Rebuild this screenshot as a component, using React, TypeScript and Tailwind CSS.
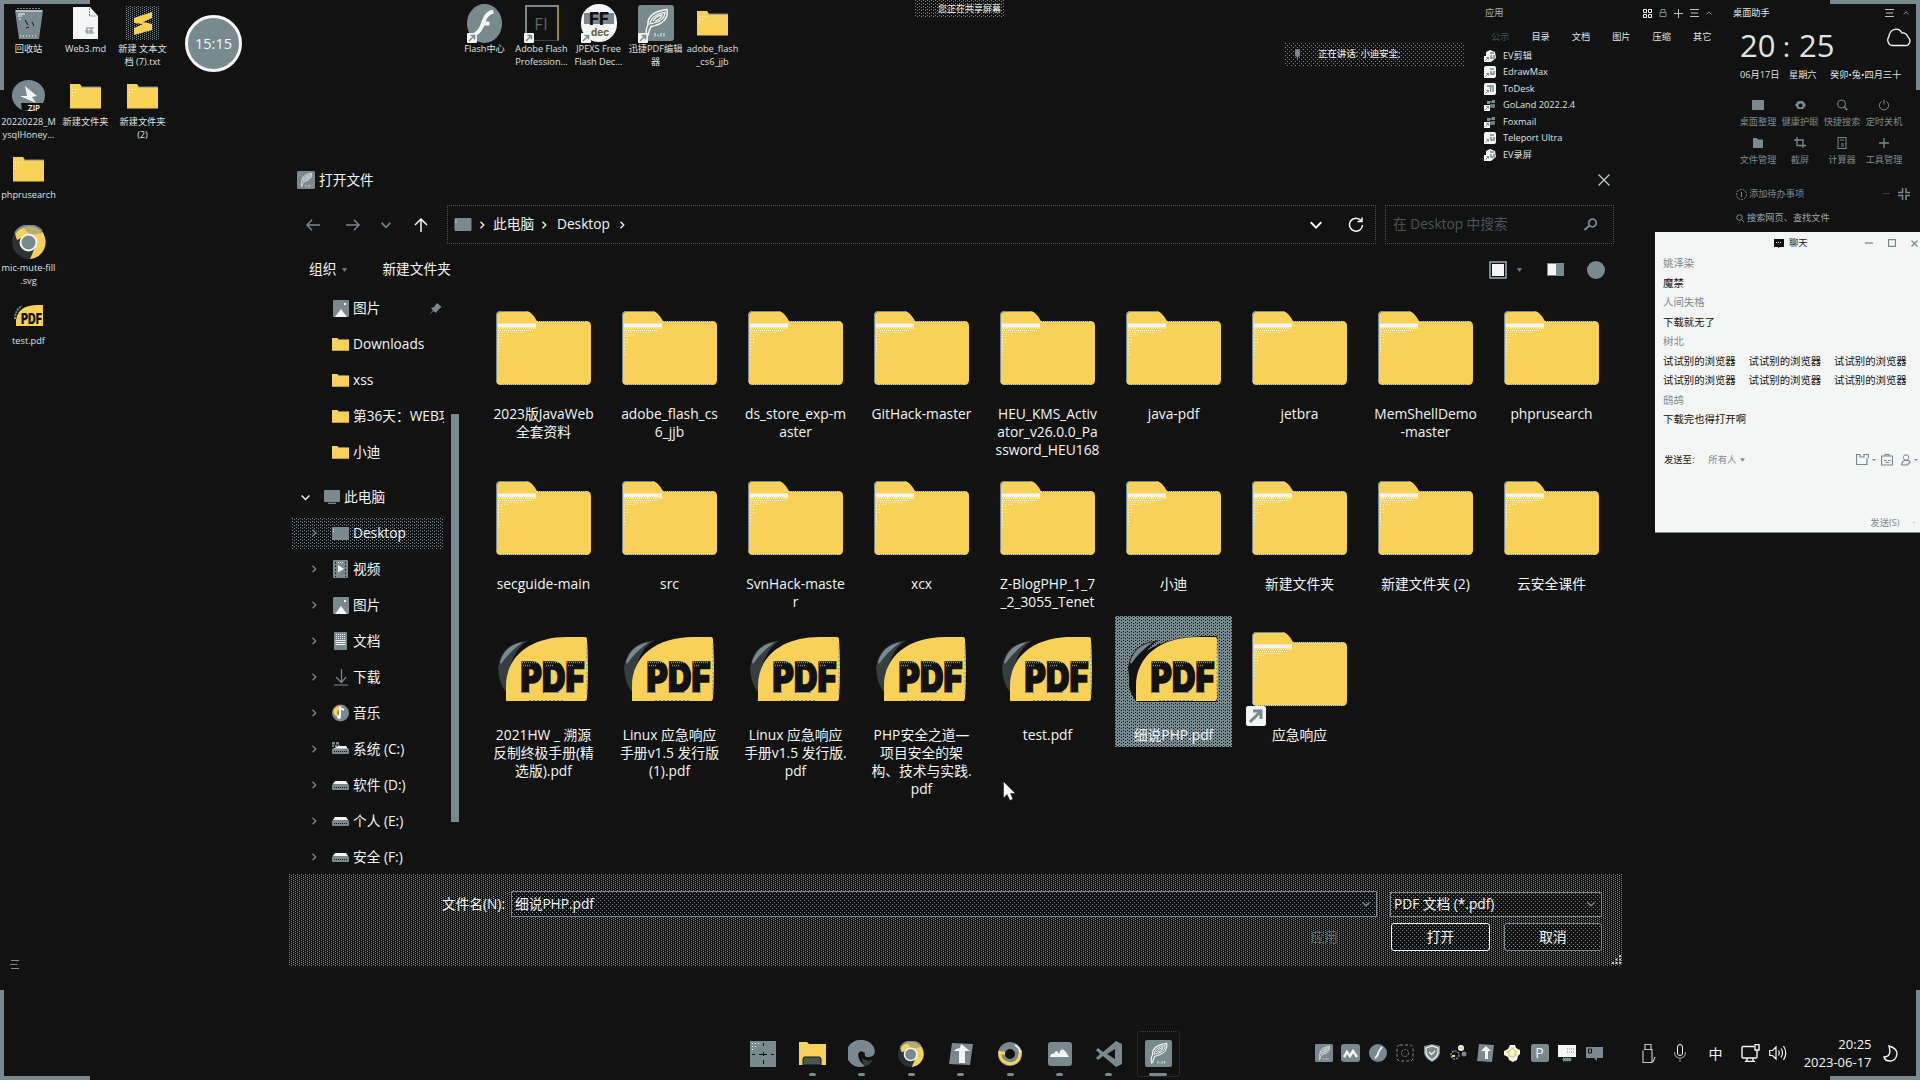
import React from "react";

const G = "#788a8f";
const W = "#f4f6f5";
const Y = "#f8d159";
const K = "#121212";

const FONT = "font-['Open_Sans','Noto_Sans_CJK_SC',sans-serif]";

const DITHER_DENSE =
  "bg-[radial-gradient(circle_at_0.5px_0.5px,#788a8f_0.6px,transparent_0.6px),radial-gradient(circle_at_2.5px_1.5px,#788a8f_0.6px,transparent_0.6px)] bg-[size:4px_2px]";
const DITHER_MID =
  "bg-[radial-gradient(circle_at_0.5px_0.5px,#788a8f_0.6px,transparent_0.6px),radial-gradient(circle_at_2.5px_1.5px,#788a8f_0.6px,transparent_0.6px)] bg-[size:4px_3px]";
const DITHER_LIGHT =
  "bg-[radial-gradient(circle_at_0.5px_0.5px,#788a8f_0.6px,transparent_0.6px),radial-gradient(circle_at_2.5px_2.5px,#788a8f_0.6px,transparent_0.6px)] bg-[size:4px_4px]";
const DITHER_SELECTED =
  "bg-[#788a8f] bg-[radial-gradient(circle_at_0.5px_0.5px,#121212_0.6px,transparent_0.6px),radial-gradient(circle_at_2.5px_1.5px,#121212_0.6px,transparent_0.6px)] bg-[size:4px_3px]";

type SvgProps = { w: number; h: number; vb: string; children: React.ReactNode; className?: string };
const Svg = ({ w, h, vb, children, className }: SvgProps) => (
  <svg width={w} height={h} viewBox={vb} fill="none" className={"shrink-0 " + (className ?? "")}>
    {children}
  </svg>
);

/* ---------- icons ---------- */

const BigFolder = () => (
  <Svg w={95} h={74} vb="0 0 95 74">
    <path d="M0 5Q0 0 5 0H31Q36 1 41 10H90Q95 10 95 15V69Q95 74 90 74H5Q0 74 0 69Z" fill={Y} />
    <path d="M0.5 70V5Q1 0.5 5 0.5H31" stroke={G} strokeWidth="1" />
    <path d="M42 10.5H90M6 73.5H90" stroke={G} strokeDasharray="1 1" />
    <rect x="2" y="12.5" width="38" height="4" fill={W} />
    <path d="M3 17.5H40" stroke={W} strokeDasharray="1 1" />
    <path d="M2 19.5H36" stroke={W} strokeDasharray="1 1" />
    <path d="M3 21.5H28" stroke={W} strokeDasharray="1 2" />
    <path d="M2 23.5H14" stroke={W} strokeDasharray="1 2" />
    <path d="M2.5 25V45M5.5 25V34" stroke={W} strokeDasharray="1 2" />
  </Svg>
);

const PdfIcon = ({ selected }: { selected?: boolean }) => (
  <Svg w={93} h={66} vb="0 0 93 66">
    {selected && <path d="M2 50C0 20 30 -2 90 0V66H10Q4 60 2 50Z" fill={K} />}
    <path d="M1 32Q4 8 28 5L32 4Q12 14 9 56Q2 48 1 32Z" fill={selected ? K : "#363e40"} />
    <path d="M3 26Q8 9 26 6Q12 16 4 28Z" fill={G} />
    <path d="M9 65V50C9 20 34 1 70 1H88Q90 1 90 4Q92 34 90 61Q90 65 88 65Z" fill={Y} />
    <path d="M90 8V58M32 64.500H66" stroke={G} strokeDasharray="2 2" />
    <text
      x="23.500"
      y="55.500"
      fontFamily="Inter, sans-serif"
      fontWeight="900"
      fontSize="41"
      textLength="64"
      lengthAdjust="spacingAndGlyphs"
      fill={K}
      stroke={K}
      strokeWidth="1.600"
    >
      PDF
    </text>
    <path d="M25 26.500H41M48 26.500H62M70 26.500H86M26 29.500H33M49 29.500H56M71 29.500H76" stroke={G} strokeWidth="1.500" strokeDasharray="1 1" />
    <path d="M33 56.500H24M47 56.500H62M78 56.500H70" stroke={G} />
  </Svg>
);

const MiniFolder = ({ w = 31, h = 25 }: { w?: number; h?: number }) => (
  <svg width={w} height={h} viewBox="0 0 31 25" fill="none" preserveAspectRatio="none" className="shrink-0">
    <path d="M0 0H10L12 3H31V24.500H0Z" fill={Y} />
    <path d="M2 5.500H11M2 8.500H8M2 11.500H4" stroke={W} strokeDasharray="1 2" />
    <path d="M11 3H31" stroke={G} />
  </svg>
);

const Shortcut = ({ s = 10 }: { s?: number }) => (
  <Svg w={s} h={s} vb="0 0 10 10">
    <rect width="10" height="10" rx="1" fill={W} />
    <path d="M2 8L7 3M3.500 2.500H7.500V6.500" stroke={G} strokeWidth="1.500" />
  </Svg>
);

const Chrome = ({ s }: { s: number }) => (
  <Svg w={s} h={s} vb="0 0 34 34">
    <circle cx="17" cy="17" r="17" fill="#2b3234" />
    <path d="M17 17L3 8A17 17 0 0 1 32 9Z" fill="#b8ad74" />
    <path d="M5 15L3 9A17 17 0 0 1 12 3L17 9Z" fill={Y} />
    <path d="M3 8A17 17 0 0 1 30 6" stroke={G} strokeWidth="2" />
    <path d="M17 10L31 8A17 17 0 0 1 18 34L24 20Z" fill={Y} />
    <circle cx="16.500" cy="17.500" r="8" fill={G} stroke={W} strokeWidth="2" />
  </Svg>
);

const RecycleBin = () => (
  <Svg w={28} h={32} vb="0 0 28 32">
    <path d="M0 3H28L24 32H4Z" fill={G} />
    <path d="M2 1.500H25" stroke={G} strokeDasharray="2 1" />
    <path d="M1 4H27M3 7H10M3 9H7M4 12H6" stroke={W} />
    <path d="M10 13L13 18M17 15L19 19M11 21L14 20" stroke={K} />
    <path d="M5 29H23" stroke={W} strokeDasharray="1 2" />
  </Svg>
);

const DocFile = () => (
  <Svg w={26} h={32} vb="0 0 26 32">
    <path d="M0 0H17L25 9V32H0Z" fill={W} />
    <path d="M16.500 1V9H24" stroke={G} strokeDasharray="2 1" />
    <path d="M13 21H21M12 24H20M13 26H21M14 21V26M18 21V26" stroke={G} />
  </Svg>
);

const Sublime = () => (
  <div className={"flex size-[34px] items-center justify-center " + DITHER_DENSE}>
    <Svg w={20} h={24} vb="0 0 20 24">
      <path d="M1 7L19 1V7L10 11L19 13V19L1 24V17L10 13L1 12Z" fill={Y} />
    </Svg>
  </div>
);

const ZipFile = () => (
  <div className="relative h-[32px] w-[33px]">
    <Svg w={33} h={31} vb="0 0 33 31">
      <ellipse cx="16.500" cy="15.500" rx="16.500" ry="15.500" fill={G} />
      <path d="M13 6L25 16L20 17L24 23L8 16H15Z" fill={W} />
      <path d="M10 31L9 23H33L30 28Z" fill={K} />
    </Svg>
    <span className="absolute right-[5px] bottom-0 text-[8px] leading-[9px] font-semibold text-[#f4f6f5]">ZIP</span>
  </div>
);

const Flash = ({ s = 36 }: { s?: number }) => (
  <Svg w={s} h={s} vb="0 0 36 40">
    <ellipse cx="18" cy="20" rx="18" ry="20" fill={G} />
    <path d="M27 8Q20 9 17 18Q14 29 8 31M15 20H23" stroke={W} strokeWidth="4" />
  </Svg>
);

const FlashPro = () => (
  <div className="flex h-[36px] w-[34px] items-center justify-center border-2 border-b border-[#788a8f] border-b-[#3a4244] border-r-[#f8d159]/60 text-[16px] leading-none font-normal tracking-[1px] text-[#5b696d]">
    Fl
  </div>
);

const FFDec = () => (
  <div className="flex h-[38px] w-[36px] flex-col items-center justify-center rounded-full bg-[#f4f6f5] bg-[linear-gradient(#788a8f,#788a8f)] bg-[size:30px_11px] bg-[position:3px_9px] bg-no-repeat">
    <svg width="34" height="34" viewBox="0 0 34 34">
      <text x="17" y="19" textAnchor="middle" fontFamily="Inter, sans-serif" fontWeight="800" fontSize="17" fill={K}>
        FF
      </text>
      <text x="18" y="30" textAnchor="middle" fontFamily="Inter, sans-serif" fontWeight="700" fontSize="10" fill="#6b5c2b">
        dec
      </text>
    </svg>
  </div>
);

const Feather = ({ w, h }: { w: number; h: number }) => (
  <svg width={w} height={h} viewBox="0 0 36 40" preserveAspectRatio="none" fill="none" className="shrink-0">
    <rect width="36" height="40" rx="3" fill={G} />
    <path d="M9 35Q7 28 10 22Q9 8 29 5Q31 18 17 23L13 24Q11 28 10 34" stroke={W} strokeWidth="1.500" />
    <path d="M12 21Q13 11 27 8Q27 17 16 20ZM15 18Q17 13 24 11Q23 16 17 18" stroke={W} strokeWidth="1.300" />
    <path d="M17 31V35M20 33V35M23 31V35M26 31V35" stroke={W} />
  </svg>
);

const SmallPdf = () => (
  <Svg w={30} h={23} vb="0 0 30 23">
    <path d="M1 15Q1 6 8 2" stroke={G} strokeDasharray="2 1" strokeWidth="2" />
    <path d="M2 22V16Q4 1 24 1H29V22Z" fill={Y} />
    <text
      x="7"
      y="20"
      fontFamily="Inter, sans-serif"
      fontWeight="900"
      fontSize="14"
      textLength="21"
      lengthAdjust="spacingAndGlyphs"
      fill={K}
    >
      PDF
    </text>
  </Svg>
);

/* ---------- desktop shortcuts ---------- */

type DesktopItem = { col: string; row: string; label: string[]; icon: React.ReactNode; link?: boolean };

const desktopItems: DesktopItem[] = [
  { col: "col-start-1", row: "row-start-1", label: ["回收站"], icon: <RecycleBin /> },
  { col: "col-start-2", row: "row-start-1", label: ["Web3.md"], icon: <DocFile /> },
  { col: "col-start-3", row: "row-start-1", label: ["新建 文本文", "档 (7).txt"], icon: <Sublime /> },
  { col: "col-start-1", row: "row-start-2", label: ["20220228_M", "ysqlHoney..."], icon: <ZipFile /> },
  { col: "col-start-2", row: "row-start-2", label: ["新建文件夹"], icon: <MiniFolder /> },
  { col: "col-start-3", row: "row-start-2", label: ["新建文件夹", "(2)"], icon: <MiniFolder /> },
  { col: "col-start-1", row: "row-start-3", label: ["phprusearch"], icon: <MiniFolder /> },
  { col: "col-start-1", row: "row-start-4", label: ["mic-mute-fill", ".svg"], icon: <Chrome s={34} /> },
  { col: "col-start-1", row: "row-start-5", label: ["test.pdf"], icon: <SmallPdf /> },
  { col: "col-start-9", row: "row-start-1", label: ["Flash中心"], icon: <Flash s={39} />, link: true },
  { col: "col-start-10", row: "row-start-1", label: ["Adobe Flash", "Profession..."], icon: <FlashPro />, link: true },
  { col: "col-start-11", row: "row-start-1", label: ["JPEXS Free", "Flash Dec..."], icon: <FFDec />, link: true },
  { col: "col-start-12", row: "row-start-1", label: ["迅捷PDF编辑", "器"], icon: <Feather w={36} h={36} />, link: true },
  { col: "col-start-13", row: "row-start-1", label: ["adobe_flash", "_cs6_jjb"], icon: <MiniFolder /> },
];

const Desktop = () => (
  <div className="grid w-[741px] auto-rows-[73px] grid-cols-[repeat(13,57px)]">
    {desktopItems.map((d, i) => (
      <div key={i} className={"flex flex-col items-center pt-1 " + d.col + " " + d.row}>
        <div className="relative flex h-[38px] w-[38px] items-center justify-center">
          {d.icon}
          {d.link && (
            <span className="absolute -bottom-px left-[1px]">
              <Shortcut />
            </span>
          )}
        </div>
        <div className="text-center text-[9.2px] leading-[13px] whitespace-nowrap text-[#dfe4e4]">
          {d.label.map((l) => (
            <div key={l}>{l}</div>
          ))}
        </div>
      </div>
    ))}
  </div>
);

/* ---------- dialog ---------- */

const Chevron = ({ dir, color = W, s = 8 }: { dir: "r" | "d"; color?: string; s?: number }) => (
  <Svg w={s} h={s} vb="0 0 8 8">
    <path d={dir === "r" ? "M2.500 0.800L5.800 4L2.500 7.200" : "M0.500 2.200L4 5.800L7.500 2.200"} stroke={color} strokeWidth="1.300" />
  </Svg>
);

const Caret = ({ color = G }: { color?: string }) => (
  <Svg w={5} h={4} vb="0 0 6 4">
    <path d="M0 0H6L3 4Z" fill={color} />
  </Svg>
);

const Picture = () => (
  <Svg w={16} h={17} vb="0 0 16 17">
    <rect width="16" height="17" rx="1" fill={G} />
    <path d="M2 17L8 9L14 17Z" fill={W} />
    <rect x="11" y="3" width="2" height="2" fill={W} />
  </Svg>
);
const Monitor = () => (
  <Svg w={16} h={14} vb="0 0 16 14">
    <rect width="16" height="12" rx="1" fill={G} />
    <path d="M4 13.300H12" stroke={G} strokeWidth="1.300" />
  </Svg>
);
const DesktopIc = ({ w = 17 }: { w?: number }) => (
  <Svg w={w} h={13} vb="0 0 17 13">
    <rect width="17" height="13" rx="1" fill={G} />
    <path d="M1.500 2V5" stroke={W} strokeDasharray="1 1" />
  </Svg>
);
const Video = () => (
  <Svg w={15} h={18} vb="0 0 15 18">
    <rect width="15" height="18" rx="1" fill={G} />
    <path d="M2.500 2V17M12.500 2V17" stroke={K} strokeDasharray="1.500 2" />
    <path d="M5 5L11 9L5 12.500Z" fill={W} />
    <path d="M5 2.500H11" stroke={W} strokeDasharray="1 1" />
  </Svg>
);
const Doc = () => (
  <Svg w={13} h={18} vb="0 0 13 18">
    <rect width="13" height="18" rx="1" fill={G} />
    <path d="M2 2.500H11M2 4.500H11M2 6.500H11" stroke={W} strokeDasharray="1 1" />
    <path d="M1.500 8.500H11.500M1.500 10.500H11.500M1.500 12.500H11.500" stroke={W} />
  </Svg>
);
const Download = () => (
  <Svg w={14} h={17} vb="0 0 14 17">
    <path d="M7.500 0V13M2 8L7.500 13.500L12 8M0 16H14" stroke={G} strokeWidth="1.200" />
  </Svg>
);
const Music = () => (
  <Svg w={17} h={18} vb="0 0 17 18">
    <circle cx="8.500" cy="9" r="8.500" fill={G} />
    <path d="M2 5Q6 1 10 2L5 8L6 13Q0 11 2 5Z" fill={Y} />
    <path d="M8 13V4L12 6" stroke={W} strokeWidth="2" />
    <circle cx="7" cy="13" r="2" fill={W} />
  </Svg>
);
const Drive = ({ sys }: { sys?: boolean }) => (
  <Svg w={17} h={14} vb="0 0 17 14">
    {sys && <path d="M0 0H3V2.500H0ZM4 0H7V2.500H4Z" fill={G} />}
    {sys && <path d="M0 4H8" stroke={W} strokeDasharray="2 1" />}
    <path d={sys ? "M6 4H14L16 7H1Z" : "M3 3H14L16.500 6.500H0.500Z"} fill={W} />
    <rect x="0" y="6.500" width="17" height="5.500" rx="1" fill={G} />
    <path d="M2 9.500H15" stroke={K} strokeDasharray="1 1" />
  </Svg>
);

type Nav = { label: string; icon: React.ReactNode; arrow?: boolean; active?: boolean };
const quick: Nav[] = [
  { label: "图片", icon: <Picture /> },
  { label: "Downloads", icon: <MiniFolder w={17} h={13} /> },
  { label: "xss", icon: <MiniFolder w={17} h={13} /> },
  { label: "第36天：WEB攻", icon: <MiniFolder w={17} h={13} /> },
  { label: "小迪", icon: <MiniFolder w={17} h={13} /> },
];
const tree: Nav[] = [
  { label: "Desktop", icon: <DesktopIc />, active: true },
  { label: "视频", icon: <Video /> },
  { label: "图片", icon: <Picture /> },
  { label: "文档", icon: <Doc /> },
  { label: "下载", icon: <Download /> },
  { label: "音乐", icon: <Music /> },
  { label: "系统 (C:)", icon: <Drive sys /> },
  { label: "软件 (D:)", icon: <Drive /> },
  { label: "个人 (E:)", icon: <Drive /> },
  { label: "安全 (F:)", icon: <Drive /> },
];

const NavRow = ({ item, arrow, pinned }: { item: Nav; arrow?: boolean; pinned?: boolean }) => (
  <div className="flex h-9 items-center">
    <div className={"flex h-[31px] w-[152px] items-center overflow-hidden " + (item.active ? DITHER_MID : "")}>
      <span className="flex w-[40px] shrink-0 pl-[18px]">{arrow && <Chevron dir="r" color={G} />}</span>
      <span className="flex w-[17px] shrink-0 justify-center">{item.icon}</span>
      <span className="ml-[4px] w-[91px] overflow-hidden whitespace-nowrap">{item.label}</span>
      {pinned && (
        <Svg w={13} h={13} vb="0 0 13 13" className="-ml-[15px]">
          <path d="M0 12.500L4 8.500L2 6L5 5L8 1L12.500 5L9 8L7 11L5 9Z" fill={G} />
        </Svg>
      )}
    </div>
  </div>
);

type FileItem = { name: string[]; kind: "folder" | "pdf"; selected?: boolean; link?: boolean };
const folders = (names: string[][]): FileItem[] => names.map((name) => ({ name, kind: "folder" }));
const rows: FileItem[][] = [
  folders([
    ["2023版JavaWeb", "全套资料"],
    ["adobe_flash_cs", "6_jjb"],
    ["ds_store_exp-m", "aster"],
    ["GitHack-master"],
    ["HEU_KMS_Activ", "ator_v26.0.0_Pa", "ssword_HEU168"],
    ["java-pdf"],
    ["jetbra"],
    ["MemShellDemo", "-master"],
    ["phprusearch"],
  ]),
  folders([
    ["secguide-main"],
    ["src"],
    ["SvnHack-maste", "r"],
    ["xcx"],
    ["Z-BlogPHP_1_7", "_2_3055_Tenet"],
    ["小迪"],
    ["新建文件夹"],
    ["新建文件夹 (2)"],
    ["云安全课件"],
  ]),
  [
    { name: ["2021HW _ 溯源", "反制终极手册(精", "选版).pdf"], kind: "pdf" },
    { name: ["Linux 应急响应", "手册v1.5 发行版", "(1).pdf"], kind: "pdf" },
    { name: ["Linux 应急响应", "手册v1.5 发行版.", "pdf"], kind: "pdf" },
    { name: ["PHP安全之道—", "项目安全的架", "构、技术与实践.", "pdf"], kind: "pdf" },
    { name: ["test.pdf"], kind: "pdf" },
    { name: ["细说PHP.pdf"], kind: "pdf", selected: true },
    { name: ["应急响应"], kind: "folder", link: true },
  ],
];

const FileCell = ({ f }: { f: FileItem }) => (
  <div className={"flex h-[131px] flex-col items-center pt-4 " + (f.selected ? DITHER_SELECTED : "")}>
    <div className="relative flex h-[74px] w-[95px] shrink-0 items-center justify-center">
      {f.kind === "folder" ? <BigFolder /> : <PdfIcon selected={f.selected} />}
      {f.link && (
        <span className="absolute -bottom-[20px] -left-[6px]">
          <Shortcut s={20} />
        </span>
      )}
    </div>
    <div className="mt-5 shrink-0 text-center text-[13.8px] leading-[18px] whitespace-nowrap">
      {f.name.map((n) => (
        <div key={n}>{n}</div>
      ))}
    </div>
  </div>
);

const Dialog = () => (
  <section className="absolute top-[163px] left-[288px] flex h-[803px] w-[1335px] flex-col text-[13.7px] text-[#f4f6f5]">
    <div className="flex h-[34px] shrink-0 items-center pr-[13px] pl-[9px]">
      <Feather w={18} h={18} />
      <span className="ml-1">打开文件</span>
      <Svg w={12} h={12} vb="0 0 12 12" className="ml-auto">
        <path d="M0.500 0.500L11.500 11.500M11.500 0.500L0.500 11.500" stroke="#c5cccd" strokeWidth="1.300" />
      </Svg>
    </div>

    <div className="mt-[8px] flex h-[39px] shrink-0 items-center">
      <div className="flex w-[159px] shrink-0 items-center pl-[18px]">
        <Svg w={14} h={12} vb="0 0 14 12">
          <path d="M14 6H1M6 0.800L1 6L6 11.200" stroke={G} strokeWidth="1.500" />
        </Svg>
        <Svg w={14} h={12} vb="0 0 14 12" className="ml-[26px]">
          <path d="M0 6H13M8 0.800L13 6L8 11.200" stroke={G} strokeWidth="1.500" />
        </Svg>
        <span className="ml-[21px] flex"><Chevron dir="d" color={G} s={10} /></span>
        <Svg w={14} h={14} vb="0 0 14 14" className="ml-[23px]">
          <path d="M7 14V1M1 7L7 1L13 7" stroke={W} strokeWidth="1.500" />
        </Svg>
      </div>
      <div className="flex h-[39px] w-[929px] items-center border border-dotted border-[#4a5558] pl-[6px]">
        <DesktopIc w={18} />
        <span className="ml-[6px] flex"><Chevron dir="r" /></span>
        <span className="ml-[7px] w-[42px]">此电脑</span>
        <span className="ml-[5px] flex"><Chevron dir="r" /></span>
        <span className="ml-[9px]">Desktop</span>
        <span className="ml-[8px] flex"><Chevron dir="r" /></span>
        <span className="mr-[26px] ml-auto flex"><Chevron dir="d" s={12} /></span>
        <Svg w={16} h={16} vb="0 0 16 16" className="mr-[11px]">
          <path d="M13 3.500A6.500 6.500 0 1 0 14.500 8M14 0.500V4.500H9.500" stroke={W} strokeWidth="1.500" />
        </Svg>
      </div>
      <div className="ml-[9px] flex h-[39px] w-[229px] items-center border border-dotted border-[#4a5558] pr-[15px] pl-[7px]">
        <span className="text-[#4a5558]">在 Desktop 中搜索</span>
        <Svg w={14} h={13} vb="0 0 14 13" className="ml-auto">
          <circle cx="8.500" cy="5" r="3.800" stroke={G} strokeWidth="1.800" />
          <path d="M5.500 7.500L0.500 12" stroke={G} strokeWidth="2" />
        </Svg>
      </div>
    </div>

    <div className="flex h-[51px] shrink-0 items-center pl-[21px]">
      <span>组织</span>
      <span className="ml-[6px] flex"><Caret /></span>
      <span className="ml-[35px]">新建文件夹</span>
      <span className="ml-auto flex size-[18px] items-center justify-center rounded-[1px] border-2 border-[#788a8f]">
        <span className="h-[12px] w-[12px] bg-[#f4f6f5]" />
      </span>
      <span className="ml-[10px] flex"><Caret /></span>
      <span className="ml-[25px] flex h-[13px] w-[17px] bg-[#788a8f] p-[1px]">
        <span className="h-full w-[8px] bg-[#f4f6f5]" />
      </span>
      <span className="mr-[18px] ml-[23px] size-[18px] rounded-full bg-[#788a8f]" />
    </div>

    <div className="flex h-[579px] shrink-0 overflow-hidden">
      <nav className="w-[163px] shrink-0 pl-1">
        <div className="-mt-[5px]">
          {quick.map((q, i) => (
            <NavRow key={q.label} item={q} pinned={i === 0} />
          ))}
        </div>
        <div className="mt-[9px] flex h-9 items-center">
          <span className="flex w-[32px] pl-[9px]"><Chevron dir="d" s={9} /></span>
          <Monitor />
          <span className="ml-[4px]">此电脑</span>
        </div>
        {tree.map((t) => (
          <NavRow key={t.label} item={t} arrow />
        ))}
      </nav>
      <div className="w-[34px] shrink-0 pt-[119px]">
        <div className="h-[408px] w-[8px] bg-[#788a8f]" />
      </div>
      <div className="grid w-[1125px] shrink-0 grid-cols-[repeat(9,117px)] grid-rows-[170px_151px_180px] gap-x-[9px]">
        {rows.map((r, i) => (
          <React.Fragment key={i}>
            {r.map((f, j) => (
              <FileCell key={j} f={f} />
            ))}
          </React.Fragment>
        ))}
      </div>
    </div>

    <footer className={"relative ml-px h-[92px] w-[1333px] shrink-0 pt-[17px] pr-[20px] " + DITHER_DENSE}>
      <div className="flex h-[26px] items-center">
        <span className="w-[222px] pr-[6px] text-right">文件名(N):</span>
        <div className={"flex h-[26px] w-[866px] items-center border border-[#788a8f] bg-[#121212] px-[3px] " + DITHER_LIGHT}>
          <span>细说PHP.pdf</span>
          <span className="mr-[3px] ml-auto flex"><Chevron dir="d" color={G} /></span>
        </div>
        <div className={"ml-[13px] flex h-[25px] w-[212px] items-center border border-[#788a8f] bg-[#121212] px-[3px] " + DITHER_LIGHT}>
          <span>PDF 文档 (*.pdf)</span>
          <span className="mr-[3px] ml-auto flex"><Chevron dir="d" color={G} /></span>
        </div>
      </div>
      <div className="mt-[6px] flex h-[28px] items-center justify-end">
        <span className="mr-[53px] text-[#5b696d]">应用</span>
        <div className={"flex h-[28px] w-[99px] items-center justify-center rounded-[3px] border border-[#f4f6f5] bg-[#121212] " + DITHER_LIGHT}>打开</div>
        <div className={"ml-[14px] flex h-[28px] w-[98px] items-center justify-center rounded-[3px] border border-[#788a8f] bg-[#121212] " + DITHER_LIGHT}>取消</div>
      </div>
      <div className="absolute right-[1px] bottom-[2px]">
        <Svg w={9} h={9} vb="0 0 9 9">
          <path d="M7 0H9V2H7ZM7 3.500H9V5.500H7ZM7 7H9V9H7ZM3.500 3.500H5.500V5.500H3.500ZM3.500 7H5.500V9H3.500ZM0 7H2V9H0Z" fill="#c5cccd" />
        </Svg>
      </div>
    </footer>
  </section>
);

/* ---------- app launcher ---------- */

const apps = ["EV剪辑", "EdrawMax", "ToDesk", "GoLand 2022.2.4", "Foxmail", "Teleport Ultra", "EV录屏"];
const AppGlyph = ({ i }: { i: number }) => (
  <Svg w={12} h={12} vb="0 0 12 12">
    {i === 3 || i === 4 ? (
      <path d="M3 2H6V5H3ZM8 1H11V4H8ZM7 6L10 5V9Z" fill={G} />
    ) : i === 6 || i === 0 ? (
      <path d="M2 2L6 0L11 2L12 8L7 12H2Z" fill={W} />
    ) : (
      <rect width="12" height="12" rx="2" fill={W} />
    )}
    <path d={i === 2 ? "M3 3H10M6.500 3V9M9 4V9" : "M6 3H10M7 5V8H10V5"} stroke={G} strokeWidth="1.500" />
    <rect x="0" y="6" width="6" height="6" fill={W} />
    <path d="M1.500 10.500L4.500 7.500M2.500 7.500H4.500V9.500" stroke={G} />
  </Svg>
);

const MenuBars = () => (
  <Svg w={9} h={8} vb="0 0 9 8">
    <path d="M0 0.500H9M1 4H8M0 7.500H9" stroke="#b9c2c3" />
  </Svg>
);
const Up = () => (
  <Svg w={6} h={4} vb="0 0 6 4">
    <path d="M0.500 3.500L3 0.800L5.500 3.500" stroke={G} />
  </Svg>
);

const Launcher = () => (
  <section className="absolute top-[5px] left-[1480px] w-[242px] text-[9.2px] text-[#dfe4e4]">
    <div className="flex h-4 items-center pl-[5px]">
      <span className="text-[#aab5b7]">应用</span>
      <div className="ml-auto flex items-center gap-[7px] pr-[10px]">
        <Svg w={9} h={9} vb="0 0 9 9">
          <path d="M0.500 0.500H3.500V3.500H0.500ZM5.500 0.500H8.500V3.500H5.500ZM0.500 5.500H3.500V8.500H0.500ZM5.500 5.500H8.500V8.500H5.500Z" stroke={W} />
        </Svg>
        <Svg w={8} h={8} vb="0 0 8 8">
          <path d="M1 3.500H7V7.500H1ZM2 3.500V0.500H6V3.500" stroke={G} />
        </Svg>
        <Svg w={9} h={9} vb="0 0 9 9">
          <path d="M4.500 0V9M0 4.500H9" stroke="#b9c2c3" />
        </Svg>
        <MenuBars />
        <Up />
      </div>
    </div>
    <div className="mt-[8px] grid h-4 grid-cols-[repeat(6,40.400px)] items-center text-center">
      <span className="text-[#4a5558]">公示</span>
      <span>目录</span>
      <span>文档</span>
      <span>图片</span>
      <span>压缩</span>
      <span>其它</span>
    </div>
    <ul className="mt-[2.500px]">
      {apps.map((a, i) => (
        <li key={a} className="flex h-[16.500px] items-center gap-[7px] pl-1">
          <AppGlyph i={i} />
          {a}
        </li>
      ))}
    </ul>
  </section>
);

/* ---------- desktop assistant ---------- */

const tools: { label: string; icon: React.ReactNode }[] = [
  { label: "桌面整理", icon: <rect x="0" y="1" width="12" height="10" fill={G} /> },
  { label: "健康护眼", icon: <><path d="M1 6L4 2H9L12 6L9 10H4Z" fill={G} /><circle cx="6.500" cy="6.500" r="2" fill={K} /></> },
  { label: "快捷搜索", icon: <><circle cx="5.500" cy="5" r="4" stroke={G} /><path d="M8.500 8L11 11" stroke={G} strokeWidth="1.500" /></> },
  { label: "定时关机", icon: <path d="M6 0.500V5.500M3.500 2.500A4.600 4.600 0 1 0 8.500 2.500" stroke={G} /> },
  { label: "文件管理", icon: <path d="M1 1H5L6 2.500H11V11H1Z" fill={G} /> },
  { label: "截屏", icon: <path d="M3 0V8.500H12M0 3H9V11" stroke={G} strokeWidth="1.300" /> },
  { label: "计算器", icon: <><rect x="2" y="0.500" width="8" height="11" stroke={G} /><path d="M4 3H8M5 7H8M5 9H8" stroke={G} /></> },
  { label: "工具管理", icon: <path d="M6 1V11M1 6H11" stroke={G} strokeWidth="1.300" /> },
];

const Assistant = () => (
  <section className="absolute top-[5px] left-[1733px] flex w-[183px] flex-col text-[9.200px] text-[#dfe4e4]">
    <div className="flex h-4 items-center">
      <span>桌面助手</span>
      <span className="ml-auto flex items-center gap-[9px] pr-[7px]"><MenuBars /><Up /></span>
    </div>
    <div className="flex h-[49px] items-center pl-[7px]">
      <span className="w-[34px] text-[31px] leading-none">20</span>
      <span className="w-[25px] text-center text-[28px] leading-none">:</span>
      <span className="w-[34px] text-[31px] leading-none">25</span>
      <Svg w={24} h={19} vb="0 0 24 19" className="mr-[5px] mb-[16px] ml-auto">
        <path d="M5 17.500C0 16 0 11 2 8.500C3 0 12 -1 15 5C19 4 20 7 21 9C25 13 22 18 18 17.500Z" stroke={W} strokeWidth="1.300" />
      </Svg>
    </div>
    <div className="-mt-[3px] flex h-4 items-center pl-[7px] whitespace-nowrap">
      <span className="w-[49px]">06月17日</span>
      <span className="w-[41px]">星期六</span>
      <span>癸卯•兔•四月三十</span>
    </div>
    <div className="mt-[16px] grid grid-cols-[repeat(4,42px)] gap-y-[2px] pl-[4px]">
      {tools.map((t) => (
        <div key={t.label} className="flex h-[36px] flex-col items-center text-[#788a8f]">
          <Svg w={12} h={12} vb="0 0 12 12">{t.icon}</Svg>
          <span className="mt-[5px] leading-[12px] whitespace-nowrap">{t.label}</span>
        </div>
      ))}
    </div>
    <div className="mt-[13px] flex h-4 items-center pl-[3px] text-[#788a8f]">
      <Svg w={11} h={11} vb="0 0 11 11">
        <circle cx="5.500" cy="5.500" r="5" stroke={G} strokeDasharray="2 1" />
        <path d="M5.500 3V8" stroke={G} />
      </Svg>
      <span className="ml-[2px]">添加待办事项</span>
      <span className="ml-auto pr-[8px]">···</span>
      <Svg w={12} h={12} vb="0 0 12 12" className="mr-[6px]">
        <path d="M4.500 0V4.500H0M8 0V4.500H12M4.500 12V7.500H0M8 12V7.500H12" stroke={G} strokeWidth="1.500" />
      </Svg>
    </div>
    <div className="mt-[8px] flex h-4 items-center pl-[3px] text-[#9aa7aa]">
      <Svg w={8} h={8} vb="0 0 8 8">
        <circle cx="3.500" cy="3.500" r="2.800" stroke={G} />
        <path d="M5.500 5.500L8 8" stroke={G} />
      </Svg>
      <span className="ml-[3px]">搜索网页、查找文件</span>
    </div>
  </section>
);

/* ---------- chat ---------- */

const TRY = "试试别的浏览器";
const chat: { t: string[]; name?: boolean }[] = [
  { t: ["姚泽染"], name: true },
  { t: ["魔禁"] },
  { t: ["人间失格"], name: true },
  { t: ["下载就无了"] },
  { t: ["树北"], name: true },
  { t: [TRY, TRY, TRY] },
  { t: [TRY, TRY, TRY] },
  { t: ["鸱鸪"], name: true },
  { t: ["下载完也得打开啊"] },
];

const Chat = () => (
  <section className="absolute top-[232px] left-[1655px] flex h-[301px] w-[265px] flex-col border-b border-[#788a8f] bg-[#f4f6f5] text-[10.4px] text-[#121212]">
    <div className="flex h-[22.500px] items-center pl-[119px] text-[9.300px]">
      <Svg w={10} h={9} vb="0 0 10 9">
        <path d="M0 0H10V8H6L4 9V8H0Z" fill={K} />
        <path d="M2 3.500H8" stroke={W} strokeDasharray="1 1" />
      </Svg>
      <span className="ml-[5px]">聊天</span>
      <span className="mr-[2px] ml-auto flex items-center gap-[15px]">
        <Svg w={8} h={8} vb="0 0 8 8"><path d="M0 4H8" stroke={G} strokeWidth="1.300" /></Svg>
        <Svg w={8} h={8} vb="0 0 8 8"><path d="M0.500 0.500H7.500V7.500H0.500Z" stroke={G} strokeWidth="1.300" /></Svg>
        <Svg w={7} h={7} vb="0 0 7 7"><path d="M0.500 0.500L6.500 6.500M6.500 0.500L0.500 6.500" stroke={G} strokeWidth="1.300" /></Svg>
      </span>
    </div>
    <div className="pl-2">
      {chat.map((c, i) => (
        <div key={i} className={"flex h-[19.500px] items-center whitespace-nowrap " + (c.name ? "text-[#788a8f]" : "")}>
          {c.t.map((t, j) => (
            <span key={j} className="w-[85.500px] shrink-0">{t}</span>
          ))}
        </div>
      ))}
    </div>
    <div className="mt-[20.500px] flex h-[18px] items-center pl-[9px] text-[9.300px]">
      <span>发送至:</span>
      <span className="mr-[4px] ml-[14px] text-[#788a8f]">所有人</span>
      <Caret />
      <span className="ml-auto flex items-center">
        <Svg w={13} h={11} vb="0 0 13 11"><path d="M4 0.500H0.500V10.500H11V4M4 0.500V3H8V0.500H12.500V4" stroke={G} strokeWidth="1.200" /></Svg>
        <Svg w={4} h={3} vb="0 0 4 3" className="mx-[3px] "><path d="M0 1H4L2 3Z" fill={G} /></Svg>
        <Svg w={12} h={12} vb="0 0 12 12" className="ml-[2px]"><path d="M0.500 2H11.500V11H0.500ZM4 2V0.500H8V2M3 6.500H5.500M7 6.500H9.500M4.500 8.500H8" stroke={G} strokeWidth="1.200" /></Svg>
        <Svg w={10} h={12} vb="0 0 10 12" className="ml-[8px]"><circle cx="5" cy="3.500" r="2.700" stroke={G} /><path d="M0.500 11Q1 7 4 6.500Q8 6 9.500 8M0.500 11H6L9.500 8" stroke={G} strokeWidth="1.200" /></Svg>
        <Svg w={4} h={3} vb="0 0 4 3" className="mr-[2px] ml-[3px]"><path d="M0 1H4L2 3Z" fill={G} /></Svg>
      </span>
    </div>
    <div className="mt-auto flex h-[18px] items-center justify-end pr-[5px] text-[9.300px] text-[#788a8f]">
      发送(S)<span className="ml-[13px]">·</span>
    </div>
  </section>
);

/* ---------- taskbar ---------- */

const tasks: React.ReactNode[] = [
  <Svg w={26} h={26} vb="0 0 26 26"><path d="M0 0H26V26H0Z" fill={G} /><path d="M13.500 2V5M13.500 11V15M13.500 19V23M2 13.500H5M9 13.500H17M21 13.500H24" stroke={K} /><path d="M2 2.500H10M2 5.500H7M2 8.500H4" stroke={W} strokeDasharray="1 2" /></Svg>,
  <Svg w={27} h={25} vb="0 0 27 25"><path d="M0 1H8L10 3H27V24H0Z" fill={Y} /><path d="M4 24V18Q4 16 6 16H20Q22 16 22 18V24Z" fill="#4a5558" stroke={K} /></Svg>,
  <Svg w={27} h={27} vb="0 0 27 27"><path d="M13 0A13 13 0 0 1 27 12Q26 17 20 17Q16 17 17 13Q12 9 10 14Q10 21 17 26A13.500 13.500 0 1 1 13 0Z" fill={G} /><path d="M14 18Q18 22 25 20Q22 25 18 26Q14 23 14 18Z" fill="#343c3e" /></Svg>,
  <Chrome s={26} />,
  <Svg w={24} h={24} vb="0 0 24 24"><path d="M3 1L24 2L21 23L0 22Z" fill={G} /><path d="M12 2L21 9H16V21H10V9H5L7 7L11 6Z" fill={W} /></Svg>,
  <Svg w={24} h={24} vb="0 0 24 24"><circle cx="12" cy="12" r="8.500" stroke={G} strokeWidth="7" /><path d="M2 9Q1 15 5 19Q12 24 18 20Q23 16 22 8" stroke={Y} strokeWidth="3" /><path d="M2 11H7" stroke={Y} strokeWidth="3" /><path d="M17 3Q22 6 22 10" stroke={W} strokeWidth="1.500" /></Svg>,
  <Svg w={24} h={24} vb="0 0 24 24"><rect width="24" height="24" rx="3" fill={G} /><path d="M2 15Q3 10 6 12Q8 6 11 12Q13 5 17 9Q18 10 21 15Z" fill={W} /></Svg>,
  <Svg w={26} h={26} vb="0 0 26 26"><path d="M20 0L26 3V23L20 26L7 15L2 19L0 17L4 13L0 9L2 7L7 11ZM19 8L11 13L19 18Z" fill={G} fillRule="evenodd" /></Svg>,
  <Feather w={27} h={27} />,
];

const traySmall: React.ReactNode[] = [
  <Feather w={18} h={18} />,
  <Svg w={19} h={18} vb="0 0 19 18"><rect width="19" height="18" rx="3" fill={G} /><path d="M3 13L6 8L9 12L12 7L16 13" stroke={W} strokeWidth="2.500" /></Svg>,
  <Svg w={18} h={18} vb="0 0 18 18"><circle cx="9" cy="9" r="9" fill={G} /><path d="M13 3Q9 8 9 10Q8 13 6 14" stroke={W} strokeWidth="2" /></Svg>,
  <Svg w={18} h={18} vb="0 0 18 18"><rect x="1" y="1" width="16" height="16" rx="3" stroke={G} strokeDasharray="3 2" /><circle cx="9" cy="9" r="3.500" stroke={G} strokeDasharray="2 1" /></Svg>,
  <Svg w={16} h={18} vb="0 0 16 18"><path d="M0 2L8 0L16 2V9Q15 15 8 18Q1 15 0 9Z" fill={G} /><path d="M2 4L8 2L14 4V9Q13 13 8 16Q3 13 2 9ZM5 8L7.500 10.500L11 7" stroke={W} strokeWidth="1.200" /></Svg>,
  <Svg w={18} h={18} vb="0 0 18 18"><circle cx="5" cy="11" r="4" stroke={G} strokeWidth="1.500" strokeDasharray="2 1" /><circle cx="11" cy="4" r="3" fill={W} /><path d="M9 4H13M2 12H5" stroke={Y} strokeWidth="2" /><circle cx="14" cy="10" r="2.500" fill={G} /></Svg>,
  <Svg w={17} h={18} vb="0 0 17 18"><path d="M2 0L17 1L15 18L0 17Z" fill={G} /><path d="M9 2L14 7H11V15H8V7H4Z" fill={W} /></Svg>,
  <Svg w={17} h={18} vb="0 0 17 18"><path d="M6 1H11L12 4L16 6V10L14 12L13 16L9 18L5 16L4 13L0 11V7L4 5Z" fill={W} /><path d="M5 7L9 4L12 8L10 13L5 12ZM2 8H5M11 12L13 10" stroke={Y} strokeWidth="1.500" /></Svg>,
  <span className="flex size-[18px] items-center justify-center rounded-[2px] bg-[#788a8f] text-[14px] leading-none text-[#f4f6f5]">P</span>,
  <Svg w={18} h={17} vb="0 0 18 17"><rect width="18" height="12" fill={W} /><path d="M9 4H16M9 7H16M5 13H13V16H5Z" stroke={G} fill={G} strokeDasharray="1 1" /></Svg>,
  <Svg w={18} h={17} vb="0 0 18 17"><path d="M1 2H18V13H12V16L9 13H1Z" fill={G} /><path d="M3.500 4V8H6.500V4Z" stroke={K} /></Svg>,
];

const Taskbar = () => (
  <footer className="absolute bottom-0 left-0 h-[52px] w-full">
    <div className="flex h-full">
      <div className="ml-[738.500px] flex">
        {tasks.map((t, i) => (
          <div key={i} className="flex h-[49px] w-[49.400px] flex-col items-center justify-end">
            <div
              className={
                "flex h-[46px] w-[43px] flex-col items-center justify-between rounded-[4px] " +
                (i === 8 ? "border border-dotted border-[#3a4244] pt-[8px]" : "pt-[9px]")
              }
            >
              <span className="flex h-[27px] items-center">{t}</span>
              {i > 0 && (
                <span
                  className={
                    i === 8 ? "h-[3px] w-[18px] rounded-full bg-[#788a8f]" : "mb-[1px] h-[3px] w-[7px] rounded-full bg-[#788a8f]"
                  }
                />
              )}
            </div>
          </div>
        ))}
      </div>
      <div className="ml-[127px] flex h-[50px] items-center">
        {traySmall.map((t, i) => (
          <span key={i} className="flex w-[27px] justify-center">{t}</span>
        ))}
      </div>
      <div className="ml-[31.500px] flex h-[50px] items-center text-[#f4f6f5]">
        <span className="flex w-[20px] justify-center">
          <Svg w={14} h={19} vb="0 0 14 19"><path d="M2 5.500H10V18.500H1V6.500M3 5V0.500H9V5M13 13L11 18" stroke="#b9c2c3" strokeWidth="1.200" /></Svg>
        </span>
        <span className="ml-[11px] flex w-[20px] justify-center">
          <Svg w={12} h={19} vb="0 0 12 19"><rect x="3.500" y="0.500" width="5" height="11" rx="2.500" stroke={W} /><path d="M0.500 8Q0.500 14 6 14T11.500 8M6 14V18" stroke={G} strokeWidth="1.200" /></Svg>
        </span>
        <span className="ml-[16px] flex w-[20px] justify-center text-[14px]">中</span>
        <span className="ml-[15px] flex w-[20px] justify-center">
          <Svg w={19} h={18} vb="0 0 19 18"><path d="M13 2.500H2Q1 2.500 1 4V13Q1 14 2 14H15Q16 14 16 13V8M4 17.500H14M6 14V17M12 14V17M14 0.500H18V6H14ZM16 6V8" stroke={W} strokeWidth="1.400" /></Svg>
        </span>
        <span className="ml-[7px] flex w-[20px] justify-center">
          <Svg w={18} h={16} vb="0 0 18 16"><path d="M0.700 5.500H3.500L7 2V14L3.500 10.500H0.700ZM9.500 5.500Q11 8 9.500 10.500M12 3.500Q15 8 12 12.500M14.500 1Q19 8 14.500 15" stroke={W} strokeWidth="1.200" /></Svg>
        </span>
        <div className="ml-[13px] w-[71px] text-right text-[13px] leading-[18px]">
          <div>20:25</div>
          <div>2023-06-17</div>
        </div>
        <Svg w={15} h={17} vb="0 0 15 17" className="ml-[11px]">
          <path d="M6 1Q14 3 14 9Q13 16 7 16Q2 16 1 12Q9 12 6 1Z" stroke={W} strokeWidth="1.400" />
        </Svg>
      </div>
    </div>
  </footer>
);

export default function App() {
  return (
    <main className={"relative h-[1080px] w-[1920px] overflow-hidden bg-[#121212] " + FONT}>
      <div className="absolute top-0 left-0 h-[90px] w-[90px] border-t-4 border-l-4 border-[#788a8f]" />
      <div className="absolute top-0 right-0 z-10 h-[90px] w-[90px] border-t-4 border-r-4 border-[#788a8f]" />
      <div className="absolute bottom-0 left-0 h-[90px] w-[90px] border-b-4 border-l-4 border-[#788a8f]" />
      <div className="absolute right-0 bottom-0 h-[90px] w-[90px] border-r-4 border-b-4 border-[#788a8f]" />

      <Desktop />

      <div className="absolute top-[15px] left-[185px] flex size-[57px] items-center justify-center rounded-full border-[3px] border-[#f4f6f5] bg-[#788a8f] text-[14.500px] text-[#f4f6f5]">
        15:15
      </div>

      <div className={"absolute top-0 left-[915px] flex h-[18px] w-[90px] items-center pl-[23px] text-[9px] whitespace-nowrap text-[#f4f6f5] " + DITHER_MID}>
        您正在共享屏幕
      </div>

      <div className={"absolute top-[43px] left-[1285px] flex h-[23px] w-[179px] items-center pl-[9px] text-[9.400px] whitespace-nowrap text-[#f4f6f5] " + DITHER_LIGHT}>
        <Svg w={7} h={11} vb="0 0 7 11">
          <rect x="1" y="0" width="5" height="8" rx="2.500" fill={G} />
          <path d="M3.500 8V11" stroke={G} />
        </Svg>
        <span className="ml-[17px]">正在讲话: 小迪安全;</span>
      </div>

      <Launcher />
      <Assistant />
      <Dialog />
      <Chat />

      <div className="absolute top-[960px] left-[10px]">
        <Svg w={9} h={9} vb="0 0 9 9">
          <path d="M1 0.500H9M0 4.500H7M1 8.500H9" stroke={G} />
        </Svg>
      </div>

      <Taskbar />

      <div className="absolute top-[781px] left-[1003px]">
        <Svg w={13} h={20} vb="0 0 13 20">
          <path d="M0.500 0.500V17L4 13.500L7 19.500L10 18L7.500 12.500H12.500Z" fill={W} stroke={K} strokeWidth="0.500" />
        </Svg>
      </div>
    </main>
  );
}
